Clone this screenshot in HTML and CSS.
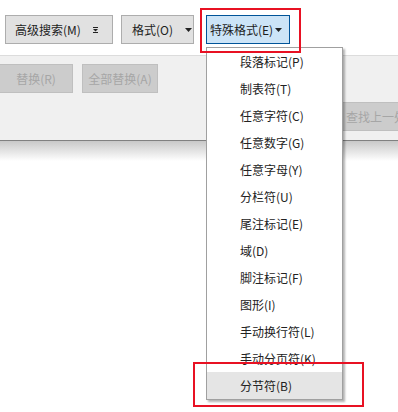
FILE: index.html
```html
<!DOCTYPE html>
<html lang="zh-CN">

<head>
    <meta charset="UTF-8">
    <title>查找和替换 - 特殊格式</title>
    <link rel="stylesheet" href="styles.css">
</head>

<body>
    <div class="dialog">
        <div class="top-row">
            <button class="btn btn-more">高级搜索(M)
                <svg class="arrow" width="5" height="6" viewBox="0 0 5 6">
                    <rect x="0" y="0" width="5" height="1" fill="#222"/>
                    <path d="M0 2 H5 L2.5 4.6 Z" fill="#222"/>
                    <rect x="0" y="5" width="5" height="1" fill="#222"/>
                </svg>
            </button>
            <button class="btn btn-format">格式(O)
                <svg class="arrow" width="7" height="4" viewBox="0 0 7 4"><path d="M0 0 H7 L3.5 4 Z" fill="#222"/></svg>
            </button>
            <button class="btn btn-special">特殊格式(E)
                <svg class="arrow" width="7" height="4" viewBox="0 0 7 4"><path d="M0 0 H7 L3.5 4 Z" fill="#222"/></svg>
            </button>
        </div>

        <div class="panel">
            <div class="action-row">
                <button class="btn btn-disabled btn-replace">替换(R)</button>
                <button class="btn btn-disabled btn-replace-all">全部替换(A)</button>
                <button class="btn btn-disabled btn-find-prev">查找上一处</button>
            </div>
        </div>
        <div class="panel-shadow"></div>

        <ul class="menu">
            <li>段落标记(P)</li>
            <li>制表符(T)</li>
            <li>任意字符(C)</li>
            <li>任意数字(G)</li>
            <li>任意字母(Y)</li>
            <li>分栏符(U)</li>
            <li>尾注标记(E)</li>
            <li>域(D)</li>
            <li>脚注标记(F)</li>
            <li>图形(I)</li>
            <li>手动换行符(L)</li>
            <li>手动分页符(K)</li>
            <li class="active">分节符(B)</li>
        </ul>

        <div class="mark mark-button"></div>
        <div class="mark mark-item"></div>
    </div>
</body>

</html>
```

FILE: styles.css
```css
body {
    margin: 0;
    padding: 0;
    background: #fff;
    font-family: "Noto Sans CJK SC", "Microsoft YaHei", sans-serif;
    font-size: 12px;
    color: #1e1e1e;
    overflow: hidden;
}

.dialog {
    position: relative;
    width: 398px;
    height: 412px;
    overflow: hidden;
}

.top-row {
    display: flex;
    align-items: flex-start;
    height: 55px;
    padding: 15px 0 0 5px;
    box-sizing: border-box;
}

.btn {
    display: flex;
    align-items: center;
    flex-shrink: 0;
    height: 29px;
    box-sizing: border-box;
    border: 1px solid #adadad;
    background: #e1e1e1;
    font-family: inherit;
    font-size: 12px;
    color: #1e1e1e;
    padding: 0;
    margin: 0;
    white-space: nowrap;
}

.btn-more {
    width: 108px;
    padding-left: 9px;
}

.btn-more .arrow {
    margin-left: 12px;
}

.btn-format {
    width: 73px;
    margin-left: 8px;
    padding-left: 10px;
}

.btn-format .arrow {
    margin-left: 12px;
}

.btn-special {
    width: 84px;
    margin-left: 12px;
    padding-left: 3px;
    background: #cce4f7;
    border-color: #005499;
}

.btn-special .arrow {
    margin-left: 2px;
}

.panel {
    height: 86px;
    background: #f0f0f0;
    border-top: 1px solid #dcdcdc;
    border-bottom: 1px solid #808080;
    box-sizing: border-box;
}

.panel-shadow {
    height: 20px;
    background: linear-gradient(#c8c8c8, #fff);
}

.action-row {
    display: flex;
    align-items: flex-start;
    padding-top: 8px;
}

.btn-disabled {
    justify-content: center;
    background: #cccccc;
    border-color: #bfbfbf;
    color: #a6a6a6;
}

.btn-replace {
    width: 73px;
    border-left: none;
}

.btn-replace-all {
    width: 76px;
    margin-left: 9px;
}

.btn-find-prev {
    justify-content: flex-start;
    width: 90px;
    margin-left: 172px;
    margin-top: 38px;
    padding-left: 15px;
}

.menu {
    position: absolute;
    left: 206px;
    top: 47px;
    width: 137px;
    margin: 0;
    padding: 0;
    list-style: none;
    background: #fff;
    border: 1px solid #a0a0a0;
    box-sizing: border-box;
    box-shadow: 2px 2px 2px rgba(0, 0, 0, 0.3);
}

.menu li {
    height: 27px;
    line-height: 27px;
    padding-left: 33px;
    color: #222;
}

.menu li.active {
    background: #e5e5e5;
}

.mark {
    position: absolute;
    border: 2px solid #e81123;
    box-sizing: border-box;
}

.mark-button {
    left: 200px;
    top: 8px;
    width: 101px;
    height: 45px;
}

.mark-item {
    left: 193px;
    top: 362px;
    width: 171px;
    height: 45px;
}
```
